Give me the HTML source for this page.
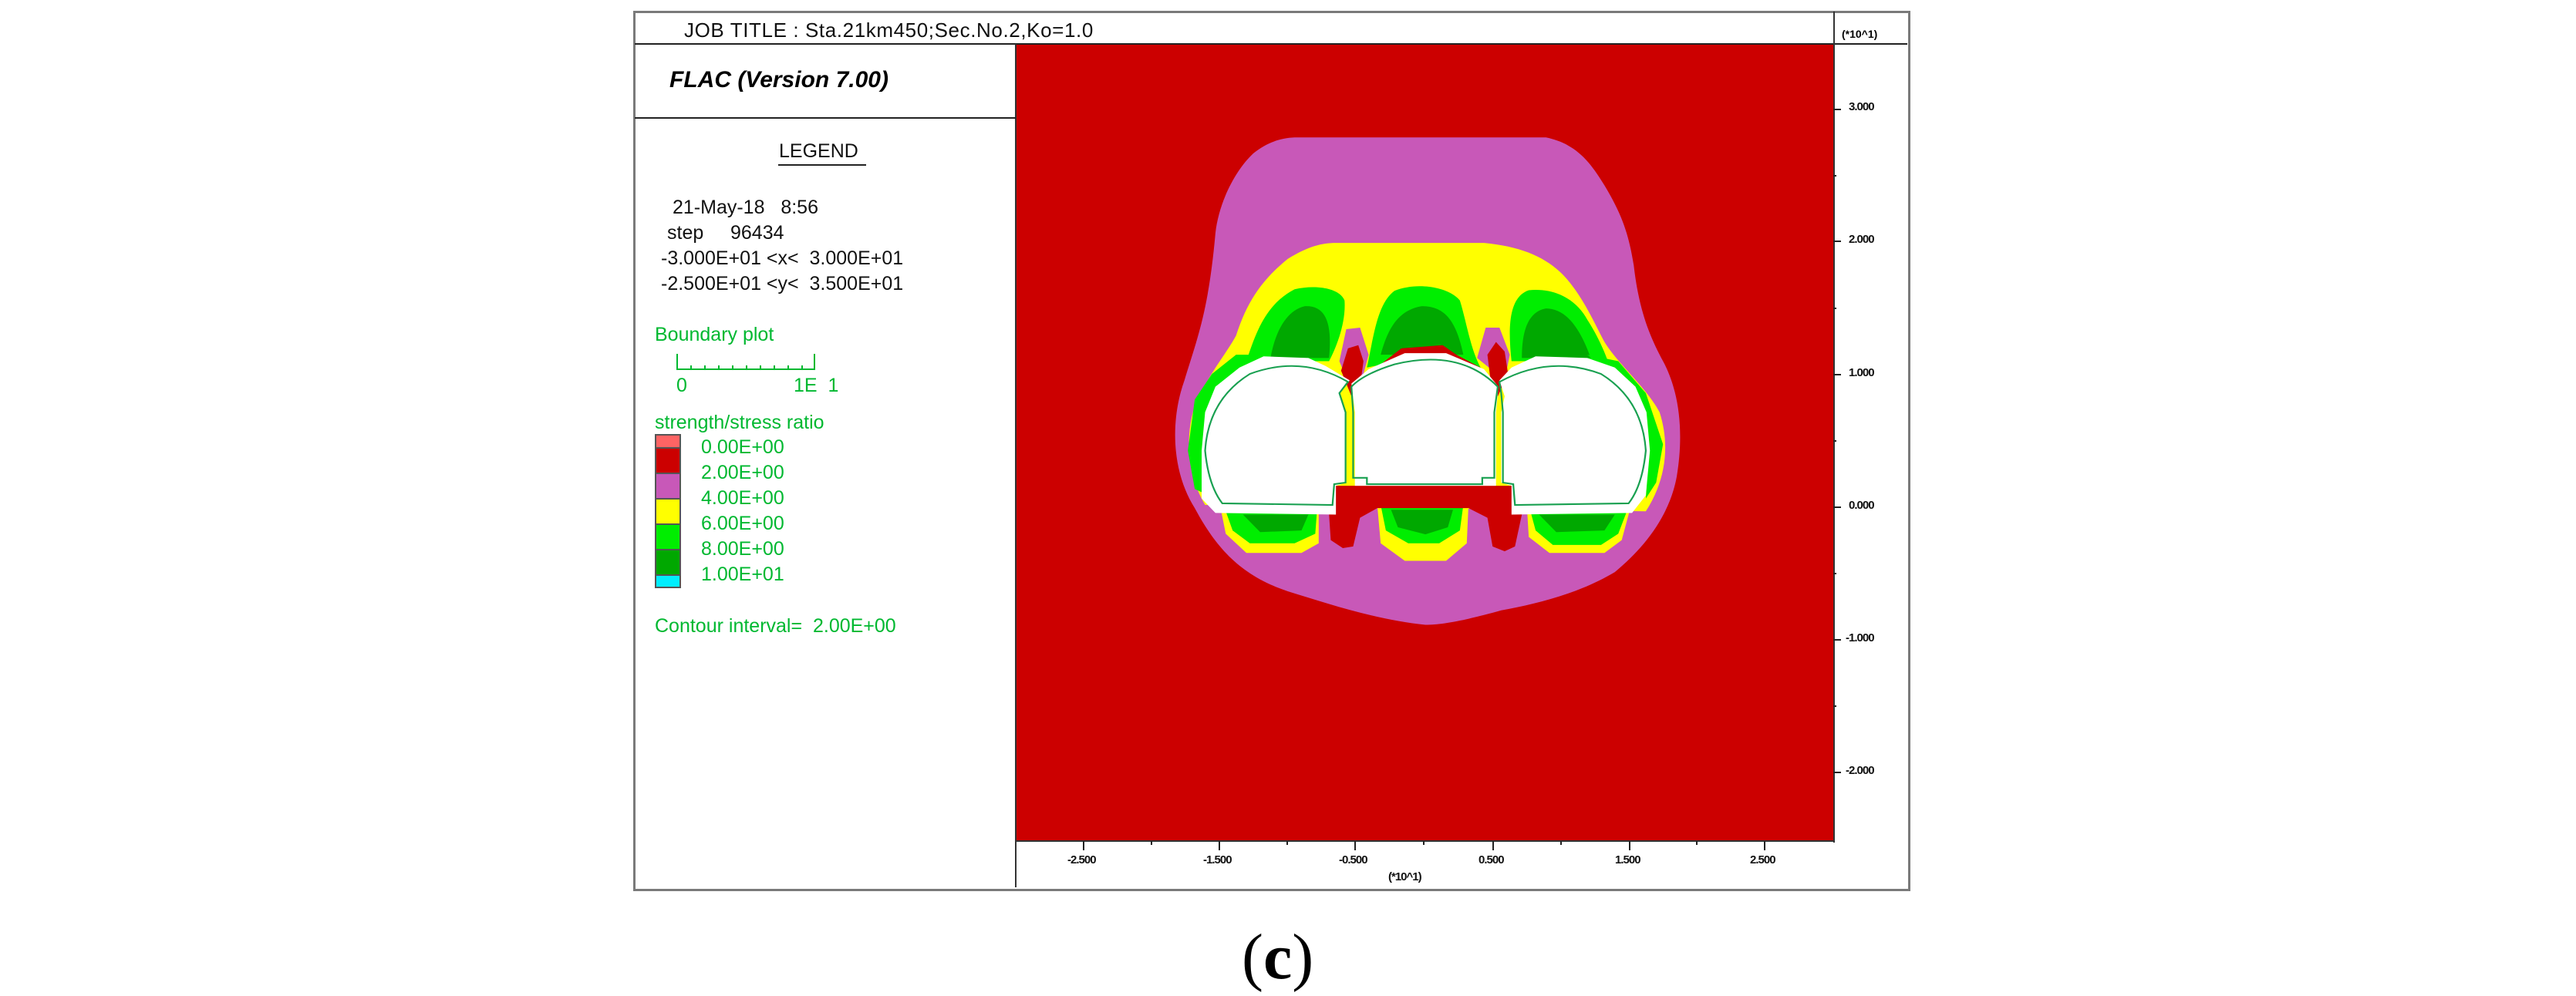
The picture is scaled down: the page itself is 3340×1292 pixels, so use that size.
<!DOCTYPE html>
<html><head><meta charset="utf-8">
<style>
html,body{margin:0;padding:0;background:#fff;}
body{width:3340px;height:1292px;position:relative;overflow:hidden;font-family:"Liberation Sans",Arial,sans-serif;}
.a{position:absolute;white-space:nowrap;line-height:1;}
.t{font-size:25px;color:#111;}
.g{font-size:25px;color:#00b830;}
.ax{font-size:15px;color:#111;font-weight:bold;letter-spacing:-1px;}
</style></head><body>

<div class="a" style="left:821px;top:14px;width:1650px;height:1136px;border:3px solid #7a7a7a;"></div>
<div class="a" style="left:823px;top:56px;width:1650px;height:2px;background:#222;"></div>
<div class="a" style="left:1316px;top:57px;width:2px;height:1094px;background:#333;"></div>
<div class="a" style="left:2377px;top:15px;width:2px;height:1078px;background:#333;"></div>
<div class="a" style="left:823px;top:152px;width:494px;height:2px;background:#222;"></div>

<div class="a t" style="left:887px;top:26px;font-size:26px;letter-spacing:0.6px;">JOB TITLE : Sta.21km450;Sec.No.2,Ko=1.0</div>
<div class="a" style="left:2388px;top:37px;font-size:14px;font-weight:bold;">(*10^1)</div>
<div class="a" style="left:868px;top:89px;font-size:30px;font-weight:bold;font-style:italic;">FLAC (Version 7.00)</div>

<div class="a t" style="left:1010px;top:184px;">LEGEND</div>
<div class="a" style="left:1009px;top:213px;width:114px;height:2px;background:#222;"></div>

<div class="a t" style="left:872px;top:257px;">21-May-18 &nbsp; 8:56</div>
<div class="a t" style="left:865px;top:290px;">step &nbsp; &nbsp; 96434</div>
<div class="a t" style="left:857px;top:323px;">-3.000E+01 &lt;x&lt; &nbsp;3.000E+01</div>
<div class="a t" style="left:857px;top:356px;">-2.500E+01 &lt;y&lt; &nbsp;3.500E+01</div>

<div class="a g" style="left:849px;top:422px;">Boundary plot</div>
<svg class="a" style="left:870px;top:455px;" width="200" height="30">
<path d="M8 4 V24 H186 V4" fill="none" stroke="#00b830" stroke-width="2"/>
<path d="M26 24v-5M44 24v-5M62 24v-5M80 24v-5M98 24v-5M116 24v-5M134 24v-5M152 24v-5M170 24v-5" stroke="#00b830" stroke-width="2"/>
</svg>
<div class="a g" style="left:877px;top:488px;">0</div>
<div class="a g" style="left:1029px;top:488px;">1E &nbsp;1</div>

<div class="a g" style="left:849px;top:536px;">strength/stress ratio</div>
<div class="a" style="left:849px;top:563px;width:34px;height:200px;background:#555;"></div>
<div class="a" style="left:851px;top:565px;width:30px;height:15px;background:#ff6464;"></div>
<div class="a" style="left:851px;top:582px;width:30px;height:31px;background:#cc0000;"></div>
<div class="a" style="left:851px;top:615px;width:30px;height:31px;background:#c858b8;"></div>
<div class="a" style="left:851px;top:648px;width:30px;height:31px;background:#ffff00;"></div>
<div class="a" style="left:851px;top:681px;width:30px;height:31px;background:#00ee00;"></div>
<div class="a" style="left:851px;top:714px;width:30px;height:31px;background:#00a800;"></div>
<div class="a" style="left:851px;top:747px;width:30px;height:14px;background:#00eeff;"></div>
<div class="a g" style="left:909px;top:568px;">0.00E+00</div>
<div class="a g" style="left:909px;top:601px;">2.00E+00</div>
<div class="a g" style="left:909px;top:634px;">4.00E+00</div>
<div class="a g" style="left:909px;top:667px;">6.00E+00</div>
<div class="a g" style="left:909px;top:700px;">8.00E+00</div>
<div class="a g" style="left:909px;top:733px;">1.00E+01</div>
<div class="a g" style="left:849px;top:800px;">Contour interval= &nbsp;2.00E+00</div>

<div class="a" style="left:1318px;top:58px;width:1059px;height:1032px;background:#cc0000;"></div>
<div class="a" style="left:1318px;top:1090px;width:1059px;height:2px;background:#333;"></div>

<svg class="a" style="left:1500px;top:170px;" width="700" height="650" viewBox="0 0 1568 1568" preserveAspectRatio="none">
<!-- magenta -->
<path fill="#c858b8" d="M400 20 L1130 20 C1220 40 1260 100 1300 170 C1350 260 1370 320 1385 420 C1400 560 1430 640 1470 720 C1520 820 1530 950 1510 1080 C1490 1200 1420 1300 1330 1380 C1220 1450 1100 1480 1000 1500 C900 1530 830 1545 780 1545 C640 1530 500 1480 380 1440 C240 1390 170 1300 110 1180 C40 1060 40 900 80 780 C120 640 150 560 170 320 C180 220 230 120 280 70 C320 35 360 22 400 20 Z"/>
<!-- yellow upper -->
<path fill="#ffff00" d="M140 1170 C90 1080 80 960 110 860 C150 760 200 700 230 640 C260 540 300 470 380 400 C440 360 480 350 520 350 L950 350 C1050 360 1120 390 1170 440 C1230 500 1270 600 1300 660 C1340 730 1420 800 1460 880 C1490 980 1480 1090 1420 1190 Z"/>
<path fill="#ffff00" d="M185 1180 L470 1180 L470 1290 L420 1320 L260 1320 L200 1260 Z"/>
<path fill="#ffff00" d="M640 1170 L905 1170 L900 1290 L840 1345 L720 1345 L650 1290 Z"/>
<path fill="#ffff00" d="M1075 1180 L1375 1180 L1350 1280 L1300 1320 L1140 1320 L1080 1270 Z"/>
<!-- green top lobes -->
<path fill="#00ee00" d="M260 720 C290 620 320 540 400 495 C460 480 530 490 545 530 C550 600 520 680 500 720 Z"/>
<path fill="#00a800" d="M330 710 C345 620 380 560 430 548 C490 545 510 600 500 710 Z"/>
<path fill="#00ee00" d="M610 740 C630 640 640 540 690 500 C760 470 850 490 880 530 C900 600 910 680 940 740 L800 700 Z"/>
<path fill="#00a800" d="M650 700 C670 620 700 560 770 548 C840 548 870 600 890 700 Z"/>
<path fill="#00ee00" d="M1030 720 C1020 620 1020 520 1080 498 C1160 490 1220 530 1250 590 C1280 640 1300 690 1310 720 Z"/>
<path fill="#00a800" d="M1060 710 C1060 620 1080 565 1130 555 C1190 555 1230 620 1260 710 Z"/>
<path fill="#00ee00" d="M230 700 L320 700 L170 800 L140 1000 L150 1140 L110 1120 L90 1000 L110 840 L160 760 Z"/>
<path fill="#00ee00" d="M1250 700 L1340 720 L1420 820 L1470 980 L1450 1100 L1420 1150 L1430 980 L1400 830 Z"/>
<path fill="#00ee00" d="M200 1190 L465 1190 L460 1260 L400 1290 L270 1290 L220 1250 Z"/>
<path fill="#00a800" d="M250 1200 L440 1200 L420 1250 L300 1255 Z"/>
<path fill="#00ee00" d="M650 1170 L890 1170 L880 1250 L820 1290 L730 1290 L665 1250 Z"/>
<path fill="#00a800" d="M680 1185 L860 1185 L845 1240 L780 1262 L700 1240 Z"/>
<path fill="#00ee00" d="M1085 1190 L1365 1190 L1340 1260 L1290 1295 L1150 1295 L1100 1250 Z"/>
<path fill="#00a800" d="M1110 1200 L1330 1200 L1300 1250 L1160 1255 Z"/>
<path fill="#c858b8" d="M530 720 L550 620 L590 615 L615 700 L600 760 L560 800 Z"/>
<path fill="#c858b8" d="M930 710 L955 615 L995 615 L1025 700 L1010 780 Z"/>
<path fill="#cc0000" d="M535 750 L555 680 L585 670 L600 720 L590 800 L565 830 Z"/>
<path fill="#cc0000" d="M960 700 L985 660 L1010 690 L1020 760 L990 830 L970 790 Z"/>
<path fill="#cc0000" d="M590 770 L650 730 L710 680 L830 670 L870 700 L940 740 L990 800 L960 830 L840 740 L720 740 L610 800 Z"/>
<path fill="#cc0000" d="M520 1110 L1060 1110 L1060 1200 L1040 1300 L1010 1315 L975 1300 L960 1210 L905 1180 L640 1180 L590 1210 L570 1300 L540 1305 L505 1280 L500 1200 Z"/>
<path fill="#fff" d="M130 1150 L170 1195 L520 1200 L520 1110 L550 1100 L550 880 L530 820 L560 780 L490 735 L440 710 L310 705 L240 740 L170 800 L140 880 L130 1000 Z"/>
<path fill="#fff" d="M575 1110 L575 880 L565 790 L615 745 L720 695 L840 695 L950 745 L992 800 L985 880 L985 1110 Z"/>
<path fill="#fff" d="M1000 1100 L1030 1110 L1030 1200 L1380 1195 L1420 1140 L1432 1000 L1422 880 L1390 800 L1330 740 L1250 710 L1100 705 L1030 740 L995 780 L1010 830 L1000 880 Z"/>
<g fill="none" stroke="#18a050" stroke-width="5">
<path d="M190 1165 L510 1170 L515 1105 L548 1100 L548 880 L530 820 L555 785 Q420 700 270 760 Q150 840 140 1000 Q150 1110 190 1165 Z"/>
<path d="M570 1085 L610 1085 L610 1105 L945 1105 L945 1085 L980 1085 L980 880 L990 800 Q880 680 690 730 Q600 760 565 800 L570 880 Z"/>
<path d="M1370 1165 L1040 1170 L1035 1105 L1005 1100 L1005 880 L1000 820 L995 785 Q1140 700 1290 760 Q1410 840 1420 1000 Q1410 1110 1370 1165 Z"/>
</g>
</svg>

<svg class="a" style="left:2377px;top:58px;" width="20" height="1040">
<g stroke="#222" stroke-width="2">
<path d="M0 84h10M0 255h10M0 428h10M0 600h10M0 772h10M0 944h10"/>
<path d="M0 170h4M0 342h4M0 514h4M0 686h4M0 858h4"/>
</g></svg>
<div class="a ax" style="left:2397px;top:131px;">3.000</div>
<div class="a ax" style="left:2397px;top:303px;">2.000</div>
<div class="a ax" style="left:2397px;top:476px;">1.000</div>
<div class="a ax" style="left:2397px;top:648px;">0.000</div>
<div class="a ax" style="left:2393px;top:820px;">-1.000</div>
<div class="a ax" style="left:2393px;top:992px;">-2.000</div>

<svg class="a" style="left:1318px;top:1091px;" width="1060" height="14">
<g stroke="#222" stroke-width="2">
<path d="M87 0v12M263 0v12M439 0v12M618 0v12M795 0v12M970 0v12"/>
<path d="M175 0v5M351 0v5M528 0v5M706 0v5M882 0v5"/>
</g></svg>
<div class="a ax" style="left:1384px;top:1108px;">-2.500</div>
<div class="a ax" style="left:1560px;top:1108px;">-1.500</div>
<div class="a ax" style="left:1736px;top:1108px;">-0.500</div>
<div class="a ax" style="left:1917px;top:1108px;">0.500</div>
<div class="a ax" style="left:2094px;top:1108px;">1.500</div>
<div class="a ax" style="left:2269px;top:1108px;">2.500</div>
<div class="a ax" style="left:1800px;top:1130px;">(*10^1)</div>

<div class="a" style="left:1610px;top:1200px;font-family:'Liberation Serif',serif;font-size:84px;color:#000;">(<b>c</b>)</div>
</body></html>
